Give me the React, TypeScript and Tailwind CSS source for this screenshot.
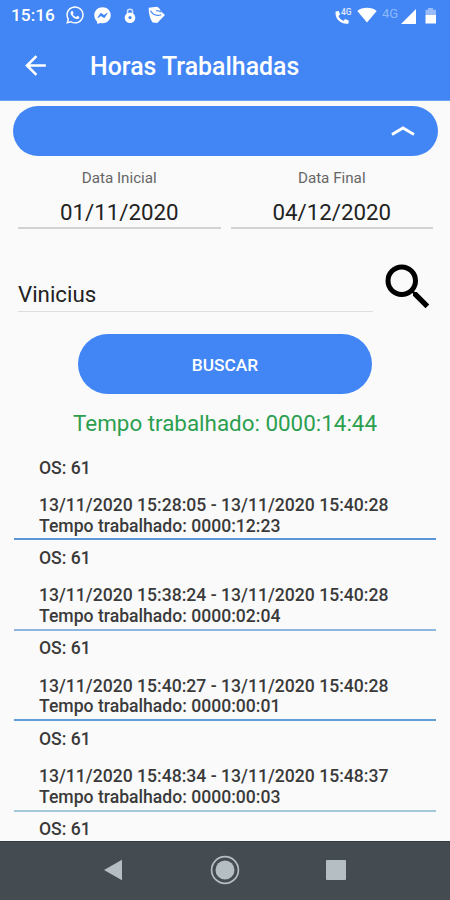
import React from "react"
import { FaWhatsapp, FaFacebookMessenger } from "react-icons/fa"
import { MdArrowBack, MdSearch } from "react-icons/md"

const entries = [
  { os: 61, start: "13/11/2020 15:28:05", end: "13/11/2020 15:40:28", total: "0000:12:23", line: "border-[#5b95da]" },
  { os: 61, start: "13/11/2020 15:38:24", end: "13/11/2020 15:40:28", total: "0000:02:04", line: "border-[#8fb6df]" },
  { os: 61, start: "13/11/2020 15:40:27", end: "13/11/2020 15:40:28", total: "0000:00:01", line: "border-[#5f9fd8]" },
  { os: 61, start: "13/11/2020 15:48:34", end: "13/11/2020 15:48:37", total: "0000:00:03", line: "border-[#a3c8d9]" },
]

const StatusBar = () => (
  <div className="flex h-8 items-center justify-between pl-[11px] pr-[14px] text-white">
    <div className="flex items-center">
      <span className="w-[54px] text-[17.3px] font-medium leading-none">15:16</span>
      <FaWhatsapp className="h-[20px] w-[20px] -translate-y-px" />
      <FaFacebookMessenger className="ml-[9px] h-[17px] w-[17px] -translate-y-px" />
      <svg viewBox="0 0 12 16" className="ml-[13px] h-4 w-3" fill="none">
        <path d="M3.5 6V3.3C3.5.5 8.5.5 8.5 3.3V6" stroke="#fff" strokeWidth="1.5" opacity=".75" />
        <circle cx="6" cy="9.8" r="5.3" fill="#fff" />
        <circle cx="6" cy="9.6" r="1.6" fill="#4286f5" />
      </svg>
      <svg viewBox="0 0 18 18" className="ml-[12px] h-[18px] w-[18px] -translate-y-px" fill="none">
        <path d="M.8 1.8 9 .8c2 .8 3 2.3 3.6 4.2L17 9l-7.8 8-4.5-.5C2 13 .5 7 .8 1.8Z" fill="#fff" />
        <path d="M2.5 4.8c2 3.6 5.5 5.6 10.8 4M8.2 4.6c2-.1 3.4.3 4.8 1.4" stroke="#4286f5" strokeWidth="1.2" />
      </svg>
    </div>
    <div className="flex items-center">
      <svg viewBox="0 0 17 17" className="h-[17px] w-[17px]" fill="#fff">
        <path d="M.6 3.5 3.8 3l1.3 3.4-1.6 1.5c1 2.5 2.6 4 5 4.8l1.7-1.7 3.5 1.4-.2 3.2C6.7 16.8-.4 11.5.6 3.5Z" />
        <text x="6" y="7.4" fontSize="8.5" fontWeight="500" opacity=".85" className="font-[Roboto]">4G</text>
      </svg>
      <svg viewBox="0 0 20 16" className="ml-[5px] h-4 w-5 -translate-y-px" fill="#fff">
        <path d="M.3 4C5-.2 15-.2 19.7 4L10 15.5Z" />
      </svg>
      <span className="ml-[5px] w-[19px] -translate-y-[3px] text-[13px] leading-none text-[#8cb7fa]">4G</span>
      <svg viewBox="0 0 15 15" className="h-[15px] w-[15px]" fill="#fff">
        <path d="M15 0v15H0Z" />
      </svg>
      <svg viewBox="0 0 11 16" className="ml-[9px] h-4 w-[11px]" fill="#fff">
        <path d="M3 0h5v1.8h3V7H.5V1.8H3Z" opacity=".45" />
        <path d="M.5 7H11v8.5H.5Z" />
      </svg>
    </div>
  </div>
)

const DateField = ({ label, value }: { label: string; value: string }) => (
  <div className="flex-1 border-b-2 border-[#d2d2d2] text-center">
    <div className="h-5 text-[15.2px] leading-5 text-[#666]">{label}</div>
    <div className="mt-[10px] h-[29px] text-[22.3px] leading-[28px] text-[#222]">{value}</div>
  </div>
)

const App = () => {
  return (
    <div className="flex h-[900px] w-[450px] flex-col overflow-hidden bg-[#fafafa] font-[Roboto,sans-serif]">
      <header className="h-[101px] shrink-0 border-b border-[#6b9ff5] bg-[#4286f5]">
        <StatusBar />
        <div className="flex h-[68px] items-center pl-[20px] text-white">
          <MdArrowBack className="h-[31px] w-[31px] -translate-y-px" />
          <h1 className="ml-[39px] pt-[2px] text-[24.9px] font-medium">Horas Trabalhadas</h1>
        </div>
      </header>

      <main className="flex min-h-0 flex-1 flex-col overflow-hidden">
        <button className="mx-[13px] mr-3 mt-[5px] flex h-[50px] shrink-0 items-center justify-end rounded-full bg-[#4286f5] pr-[23px]">
          <svg viewBox="0 0 24 10" className="h-[10px] w-6" fill="none">
            <path d="M1 8.5 12 2l11 6.5" stroke="#fff" strokeWidth="2.8" />
          </svg>
        </button>

        <div className="mx-[18px] mr-[17px] mt-3 flex shrink-0 gap-[10px]">
          <DateField label="Data Inicial" value="01/11/2020" />
          <DateField label="Data Final" value="04/12/2020" />
        </div>

        <div className="mt-7 flex h-[55px] shrink-0 pl-[18px]">
          <div className="flex w-[355px] items-end border-b border-[#dedede] pb-[3px] text-[22.3px] leading-[27px] text-[#222]">
            Vinicius
          </div>
          <MdSearch className="ml-[4.5px] h-[60px] w-[60px] shrink-0 text-black" />
        </div>

        <button className="ml-[78px] mt-[22px] h-[60px] w-[294px] shrink-0 rounded-full bg-[#4286f5] pt-[3px] text-[17.3px] font-medium text-white">
          BUSCAR
        </button>

        <div className="mt-[15px] h-7 shrink-0 text-center text-[22.4px] leading-7 text-[#2b9f4f]">
          Tempo trabalhado: 0000:14:44
        </div>

        <div className="mt-[13px] pl-[14px] pr-[14px] text-[17.6px] font-medium leading-[20.5px] text-[#3a3a3a]">
          {entries.map((e, i) => (
            <div key={i} className={`h-[90.4px] border-b-2 pl-[25px] ${e.line}`}>
              <div className="pt-[7.5px]">OS: {e.os}</div>
              <div className="mt-[17px] whitespace-nowrap">
                {e.start} - {e.end}
              </div>
              <div>Tempo trabalhado: {e.total}</div>
            </div>
          ))}
          <div className="pl-[25px] pt-[7px]">OS: 61</div>
        </div>
      </main>

      <nav className="flex h-[59px] shrink-0 items-center border-t border-[#343b41] bg-[#444b51] text-[#b5bec2]">
        <svg viewBox="0 0 18 22" className="ml-[104px] h-[22px] w-[18px] -translate-y-px" fill="currentColor">
          <path d="M18 .8v20.4L0 11Z" />
        </svg>
        <svg viewBox="0 0 30 30" className="ml-[88px] h-[30px] w-[30px] -translate-y-px">
          <circle cx="15" cy="15" r="13.4" fill="none" stroke="currentColor" strokeWidth="1.7" />
          <circle cx="15" cy="15" r="9.5" fill="currentColor" />
        </svg>
        <div className="mb-[2px] ml-[86px] h-5 w-5 rounded-[1px] bg-[#b5bec2]" />
      </nav>
    </div>
  )
}

export default App
